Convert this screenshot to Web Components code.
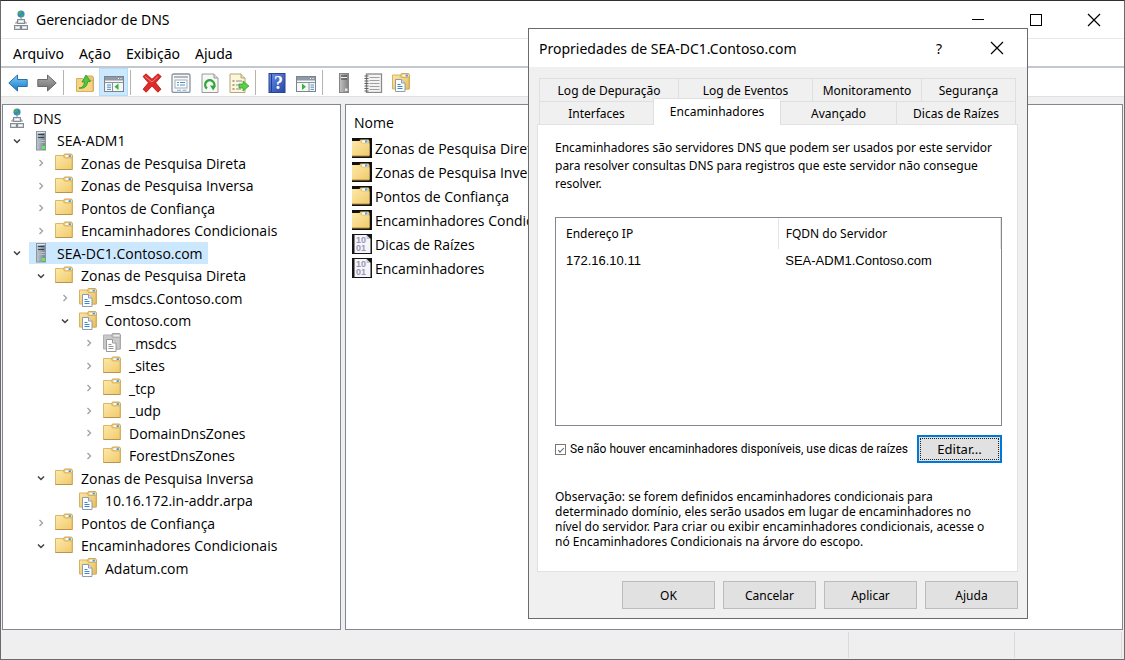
<!DOCTYPE html>
<html lang="pt-BR">
<head>
<meta charset="utf-8">
<title>Gerenciador de DNS</title>
<style>
    body {
        margin: 0;
        background: #efefef;
        font-family: "Noto Sans", "Open Sans", sans-serif;
        font-size: 14px;
        color: #000;
    }
</style>
</head>
<body>
<dns-manager></dns-manager>

<script>
const icons = {
    network: `
        <path d="M10 6v5M5 14v-2h10v2" fill="none" stroke="#8d939b"/>
        <circle cx="10" cy="4" r="3.6" fill="#3b86c4"/>
        <path d="M8 1.4c2-1 3 0 2.600 1.600-1 .6-1 1.400-2 1.400s-1.800-1-1.600-2zM10 5.200l2.600-.4c0 1.600-1.400 2.400-2 2.400z" fill="#46b34c"/>
        <g fill="#d5d9de" stroke="#858b93">
            <rect x="6.500" y="9.500" width="7" height="4"/>
            <rect x="3.500" y="15.500" width="6" height="4"/>
            <rect x="10.500" y="15.500" width="6" height="4"/>
        </g>
        <path d="M8 11.500h4M5 17.500h3M12 17.500h3" stroke="#fff"/>`,
    server: `
        <linearGradient id="g" x2="1"><stop stop-color="#c2cad2"/><stop offset="1" stop-color="#74808c"/></linearGradient>
        <rect x="5.500" y=".5" width="9" height="18.500" fill="url(#g)" stroke="#8b96a1"/>
        <path d="M6 1.500h8" stroke="#e6eaee"/>
        <path d="M7 3.500h6M7 6.500h6" stroke="#344351" stroke-width="1.200"/>
        <path d="M6 9.500h8M6 11.500h8" stroke="#b5bec7"/>
        <rect x="11" y="15" width="3" height="3" fill="#5cf04a"/>`,
    serverGray: `
        <linearGradient id="g" x2="1"><stop stop-color="#c4c4c4"/><stop offset="1" stop-color="#808080"/></linearGradient>
        <rect x="5.500" y=".5" width="9" height="19" fill="url(#g)" stroke="#858585"/>
        <path d="M7 3h6M7 6h6" stroke="#3d3d3d"/>
        <path d="M7 4.500h6" stroke="#eee"/>
        <rect x="11" y="15.500" width="2.500" height="2.500" fill="#e4e4e4"/>`,
    folder: `
        <linearGradient id="g" x2="1" y2="1"><stop stop-color="#fde9a9"/><stop offset="1" stop-color="#f0ca6c"/></linearGradient>
        <path d="M8.500 6V2.500l1-1.500h7l1 1.500V16h-9z" fill="#e8c676" stroke="#cfa95a"/>
        <rect x="10.500" y="2.200" width="6" height="1.800" fill="#fff"/>
        <rect x="13.500" y="2.200" width="2.500" height="1.800" fill="#4d9fe0"/>
        <path d="M.5 16.500v-14h7.500l1.500 2.500h7.500v11.500z" fill="url(#g)" stroke="#dcb766"/>
        <path d="M.5 16.500h17" stroke="#bb934a"/>`,
    zone: `
        <linearGradient id="g" x2="1" y2="1"><stop stop-color="#fbe6a4"/><stop offset="1" stop-color="#e8bd5c"/></linearGradient>
        <path d="M8.500 5V2l1-1.500h7l1 1.500v14h-9z" fill="#e8c676" stroke="#cfa95a"/>
        <rect x="10.500" y="1.700" width="6" height="1.800" fill="#fff"/>
        <rect x="13.500" y="1.700" width="2.500" height="1.800" fill="#4d9fe0"/>
        <path d="M.5 16v-14h7.500l1.500 2.500h7.500v11.500z" fill="url(#g)" stroke="#d9b260"/>
        <path d="M3.500 6.500h6l3.500 3.500v8.500H3.500z" fill="#fff" stroke="#8e9dad"/>
        <path d="M9.500 6.500v3.500h3.500" fill="#dfe7ef" stroke="#8e9dad"/>
        <path d="M5.500 11.500h3M5.500 13.500h5M5.500 15.500h5" stroke="#3f86cf"/>`,
    zoneGray: `
        <path d="M8.500 5V2l1-1.500h7l1 1.500v14h-9z" fill="#b8b8b8" stroke="#a2a2a2"/>
        <rect x="10.500" y="1.700" width="6" height="1.800" fill="#eee"/>
        <path d="M.5 16v-14h7.500l1.500 2.500h7.500v11.500z" fill="#c9c9c9" stroke="#b0b0b0"/>
        <path d="M3.500 6.500h6l3.500 3.500v8.500H3.500z" fill="#fff" stroke="#999"/>
        <path d="M9.500 6.500v3.500h3.500" fill="#e6e6e6" stroke="#999"/>
        <path d="M5.500 11.500h3M5.500 13.500h5M5.500 15.500h5" stroke="#999"/>`,
    folderDark: `
        <linearGradient id="g" x2="1" y2="1"><stop stop-color="#fde9a9"/><stop offset="1" stop-color="#f0ca6c"/></linearGradient>
        <path d="M0 0h20v20H0z" fill="#111"/>
        <path d="M7 5V3.500L8.500 1.500h8L17.500 3v14H7z" fill="#e8c676"/>
        <rect x="10" y="2.500" width="6" height="2" fill="#fff"/>
        <rect x="13" y="2.500" width="2.500" height="2" fill="#4d9fe0"/>
        <path d="M0 18V3h7.500l2 2.500h8V18z" fill="url(#g)"/>
        <path d="M0 18h17.500" stroke="#b38a3f"/>`,
    binary: `
        <path d="M0 0h20v20H0z" fill="#161616"/>
        <path d="M2.500 1h12l4 4v14h-16z" fill="#f5f5f7"/>
        <path d="M14.500 1v4h4z" fill="#c6c6cc"/>
        <g font-family="Liberation Sans, sans-serif" font-size="9" font-weight="bold" fill="#9a97bb">
            <text x="4" y="9">10</text>
            <text x="4" y="17">01</text>
        </g>`,
    back: `
        <linearGradient id="g" x2="0" y2="1"><stop stop-color="#7fd0f8"/><stop offset="1" stop-color="#1178c8"/></linearGradient>
        <path d="M.8 10L9.500 2v4.500h9.700v7H9.500V18z" fill="url(#g)" stroke="#2c6fa8"/>`,
    forward: `
        <linearGradient id="g" x2="0" y2="1"><stop stop-color="#b0b0b0"/><stop offset="1" stop-color="#6c6c6c"/></linearGradient>
        <path d="M19.200 10L10.500 2v4.500H.8v7h9.700V18z" fill="url(#g)" stroke="#6a6a6a"/>`,
    up: `
        <path d="M10 6l1.500-3h6L18.500 5v13H10z" fill="#e8c676" stroke="#d1ab5d"/>
        <path d="M1.500 18.500v-13h6l2 2h8.500v11z" fill="#f5d583" stroke="#d6af60"/>
        <path d="M4 15c3 0 5-2 5.500-6H7l4-7 4.500 6.500-2.800.2C12 13.500 9 16 4 15z" fill="#4fc83d" stroke="#2f9126" stroke-width=".8"/>`,
    tree: `
        <rect x=".5" y="3.500" width="19" height="15" fill="#f6f7f8" stroke="#7b838c"/>
        <path d="M1 4h18v3.500H1z" fill="#8f9aa6"/>
        <path d="M1 9.500h18M8.500 10v8" stroke="#8a929b"/>
        <path d="M14 5.500h1M16.500 5.500h1" stroke="#fff"/>
        <path d="M3 12h4M3 14.200h4M3 16.400h4" stroke="#4d8dc9"/>
        <path d="M14.500 10.500v6.500L10.500 13.800z" fill="#35b535"/>`,
    remove: `
        <path d="M1 3.500L4 .8l6 5.400L16 .8l3.200 2.700-5.500 6.300 5.300 6.500-3.200 2.900-5.800-6.200-5.800 6.200L1 16.300l5.400-6.500z" fill="#e02a2a" stroke="#b01818" stroke-width=".8"/>
        <path d="M3 3.500l7 5.500 6-5.500" fill="none" stroke="#f28a80"/>`,
    properties: `
        <rect x="1" y="1" width="18" height="18.500" rx="1.500" fill="#f7f8f9" stroke="#8c939b" stroke-width="1.300"/>
        <path d="M3 4h14" stroke="#9aa3ad" stroke-width="1.500"/>
        <rect x="4" y="7" width="12" height="8" fill="#fff" stroke="#a4adb6"/>
        <path d="M6 9.500h2M9 9.500h5M6 12h2M9 12h5" stroke="#4591d0"/>
        <path d="M6 17.300h4M11.500 17.300h4" stroke="#7fb2dc"/>`,
    refresh: `
        <path d="M2 1h12l4 4v14.500H2z" fill="#f7f7f7" stroke="#9a9a9a"/>
        <path d="M14 1v4h4" fill="#ddd" stroke="#9a9a9a"/>
        <path d="M7 15.500a4.600 4.600 0 1 1 6.500-1" fill="none" stroke="#32a83a" stroke-width="2.400"/>
        <path d="M10 12.500l6 .3-2.800 4.700z" fill="#32a83a"/>`,
    exporter: `
        <path d="M1 1h11l4 4v14.500H1z" fill="#fdf6d8" stroke="#b3a57c"/>
        <path d="M12 1v4h4" fill="#efe3b4" stroke="#b3a57c"/>
        <path d="M3.500 8h2M3.500 12h2M3.500 16h2" stroke="#555"/>
        <path d="M7 8h6M7 12h5M7 16h5" stroke="#8c86b0"/>
        <path d="M10 11h4V8l6 5-6 5v-3h-4z" fill="#5ad045" stroke="#35972a" stroke-width=".7"/>`,
    help: `
        <linearGradient id="g" x2="1" y2="1"><stop stop-color="#6b8ee6"/><stop offset="1" stop-color="#2446a8"/></linearGradient>
        <rect x="2" y=".5" width="16" height="19" fill="url(#g)" stroke="#284590"/>
        <path d="M4.500 1v18" stroke="#213d90"/>
        <text x="11.500" y="16" text-anchor="middle" font-family="Liberation Serif, serif" font-size="18" font-weight="bold" fill="#fff">?</text>`,
    actions: `
        <rect x=".5" y="3.500" width="19" height="15" fill="#f6f7f8" stroke="#7b838c"/>
        <path d="M1 4h18v3.500H1z" fill="#8f9aa6"/>
        <path d="M1 9.500h18M13 10v8" stroke="#8a929b"/>
        <path d="M14 5.500h1M16.500 5.500h1" stroke="#fff"/>
        <path d="M14.500 12h3.500M14.500 14.200h3.500M14.500 16.400h3.500" stroke="#4d8dc9"/>
        <path d="M6 10.500V17l4-3.200z" fill="#35b535"/>`,
    notebook: `
        <rect x="3.500" y="1" width="15" height="18.500" fill="#f4f4f4" stroke="#8a8a8a" stroke-width="1.300"/>
        <path d="M6.500 4.500h10M6.500 7.500h10M6.500 10.500h10M6.500 13.500h10M6.500 16.500h10" stroke="#a0a0a0"/>
        <path d="M1.500 3h4M1.500 5.500h4M1.500 8h4M1.500 10.500h4M1.500 13h4M1.500 15.500h4M1.500 18h4" stroke="#5f5f5f"/>`,
    minimize: `<path d="M4 9.500h12" stroke="#000"/>`,
    maximize: `<rect x="4.500" y="4.500" width="11" height="11" fill="none" stroke="#000"/>`,
    close: `<path d="M4 4l12 12M16 4L4 16" stroke="#000" stroke-width="1.200"/>`,
    open: `<path d="M7 8.500l3 3 3-3" fill="none" stroke="#404040" stroke-width="1.500"/>`,
    closed: `<path d="M8.500 7l3 3-3 3" fill="none" stroke="#a0a0a0" stroke-width="1.300"/>`
};

class DnsIcon extends HTMLElement {
    connectedCallback() {
        this.attachShadow({ mode: "open" });
        this.shadowRoot.innerHTML = `
            <style>
                :host { display: inline-flex; flex: none; width: 20px; height: 20px; }
                svg { width: 100%; height: 100%; }
            </style>
            <svg viewBox="0 0 20 20" aria-hidden="true">${icons[this.getAttribute("name")]}</svg>
        `;
    }
}

customElements.define("dns-icon", DnsIcon);

class TitleBar extends HTMLElement {
    connectedCallback() {
        const buttons = this.getAttribute("buttons").split(" ");
        const names = { minimize: "Minimizar", maximize: "Maximizar", close: "Fechar", help: "Ajuda" };
        this.attachShadow({ mode: "open" });
        this.shadowRoot.innerHTML = `
            <style>
                :host { display: flex; align-items: center; height: 38px; padding-right: 1px; box-sizing: border-box; background: #fff; }
                .caption { display: flex; align-items: center; gap: 5px; flex: 1; padding-left: 10px; white-space: nowrap; }
                button {
                    display: flex;
                    align-items: center;
                    justify-content: center;
                    width: 58px;
                    height: 100%;
                    padding: 0;
                    border: none;
                    background: none;
                    font: inherit;
                    color: #000;
                }
                button:hover { background: #e5e5e5; }
            </style>
            <div class="caption"><slot name="icon"></slot><slot></slot></div>
            ${buttons.map(name => `
                <button aria-label="${names[name]}">${name === "help" ? "?" : `<dns-icon name="${name}"></dns-icon>`}</button>
            `).join("")}
        `;
    }
}

customElements.define("title-bar", TitleBar);

class MenuBar extends HTMLElement {
    connectedCallback() {
        this.attachShadow({ mode: "open" });
        this.shadowRoot.innerHTML = `
            <style>
                :host { display: block; background: #fff; border-bottom: 2px solid #c3c8cf; }
                nav { display: flex; gap: 15px; height: 27px; padding-left: 12px; }
                button { padding: 1px 0 0; border: none; background: none; font: inherit; color: inherit; }
            </style>
            <nav>
                ${["Arquivo", "Ação", "Exibição", "Ajuda"].map(item => `<button>${item}</button>`).join("")}
            </nav>
        `;
    }
}

customElements.define("menu-bar", MenuBar);

const tools = [
    ["back", "Voltar"], ["forward", "Avançar"], null,
    ["up", "Um nível acima"], ["tree", "Mostrar árvore", true], null,
    ["remove", "Excluir"], ["properties", "Propriedades"], ["refresh", "Atualizar"], ["exporter", "Exportar lista"], null,
    ["help", "Ajuda"], ["actions", "Painel de ações"], null,
    ["serverGray", "Servidor"], ["notebook", "Registros"], ["zone", "Nova zona"]
];

class ToolBar extends HTMLElement {
    connectedCallback() {
        this.attachShadow({ mode: "open" });
        this.shadowRoot.innerHTML = `
            <style>
                :host { display: flex; height: 28px; padding-left: 2px; background: #fff; border-bottom: 1px solid #e0e0e0; }
                button {
                    display: flex;
                    align-items: center;
                    justify-content: center;
                    width: 29px;
                    padding: 2px 0 0;
                    border: none;
                    background: none;
                }
                button.active { background: #cce8ff; box-shadow: inset 0 0 0 1px #b5dcf8; }
                i { width: 7px; margin: 2px 0 1px 2px; box-sizing: border-box; border-left: 1px solid #b4b4b4; }
            </style>
            ${tools.map(tool => tool
                ? `<button aria-label="${tool[1]}" class="${tool[2] ? "active" : ""}"><dns-icon name="${tool[0]}"></dns-icon></button>`
                : "<i></i>"
            ).join("")}
        `;
    }
}

customElements.define("tool-bar", ToolBar);

// level, icon, label, toggle state, selected
const nodes = [
    [0, "network", "DNS", ""],
    [1, "server", "SEA-ADM1", "open"],
    [2, "folder", "Zonas de Pesquisa Direta", "closed"],
    [2, "folder", "Zonas de Pesquisa Inversa", "closed"],
    [2, "folder", "Pontos de Confiança", "closed"],
    [2, "folder", "Encaminhadores Condicionais", "closed"],
    [1, "server", "SEA-DC1.Contoso.com", "open", true],
    [2, "folder", "Zonas de Pesquisa Direta", "open"],
    [3, "zone", "_msdcs.Contoso.com", "closed"],
    [3, "zone", "Contoso.com", "open"],
    [4, "zoneGray", "_msdcs", "closed"],
    [4, "folder", "_sites", "closed"],
    [4, "folder", "_tcp", "closed"],
    [4, "folder", "_udp", "closed"],
    [4, "folder", "DomainDnsZones", "closed"],
    [4, "folder", "ForestDnsZones", "closed"],
    [2, "folder", "Zonas de Pesquisa Inversa", "open"],
    [3, "zone", "10.16.172.in-addr.arpa", ""],
    [2, "folder", "Pontos de Confiança", "closed"],
    [2, "folder", "Encaminhadores Condicionais", "open"],
    [3, "zone", "Adatum.com", ""]
];

class TreeNode extends HTMLElement {
    connectedCallback() {
        const level = Number(this.getAttribute("level"));
        const state = this.getAttribute("state");
        this.attachShadow({ mode: "open" });
        this.shadowRoot.innerHTML = `
            <style>
                :host { display: flex; align-items: center; gap: 2px; padding-left: ${level ? level * 24 - 20 : 2}px; }
                .toggle { display: flex; width: 20px; }
                .node { display: flex; align-items: center; gap: 6px; height: 100%; padding: 0 5px 0 2px; white-space: nowrap; }
                :host([selected]) .node { background: #cce8ff; }
            </style>
            ${level ? `<span class="toggle">${state ? `<dns-icon name="${state}"></dns-icon>` : ""}</span>` : ""}
            <span class="node"><dns-icon name="${this.getAttribute("icon")}"></dns-icon><slot></slot></span>
        `;
    }
}

customElements.define("tree-node", TreeNode);

class DnsTree extends HTMLElement {
    connectedCallback() {
        this.attachShadow({ mode: "open" });
        this.shadowRoot.innerHTML = `
            <style>
                :host { display: block; padding-top: 2px; background: #fff; border: 1px solid #828790; overflow: hidden; }
                tree-node { height: 22px; }
                tree-node:nth-child(even) { height: 23px; }
            </style>
            <div role="tree">
                ${nodes.map(([level, icon, label, state, selected]) => `
                    <tree-node role="treeitem" level="${level}" icon="${icon}" state="${state}" ${selected ? "selected" : ""}>${label}</tree-node>
                `).join("")}
            </div>
        `;
    }
}

customElements.define("dns-tree", DnsTree);

const entries = [
    ["folderDark", "Zonas de Pesquisa Direta"],
    ["folderDark", "Zonas de Pesquisa Inversa"],
    ["folderDark", "Pontos de Confiança"],
    ["folderDark", "Encaminhadores Condicionais"],
    ["binary", "Dicas de Raízes"],
    ["binary", "Encaminhadores"]
];

class DnsList extends HTMLElement {
    connectedCallback() {
        this.attachShadow({ mode: "open" });
        this.shadowRoot.innerHTML = `
            <style>
                :host { display: block; background: #fff; border: 1px solid #828790; }
                table { border-collapse: collapse; }
                th { height: 31px; padding: 4px 0 0 8px; box-sizing: border-box; font-weight: normal; text-align: left; }
                td { height: 24px; padding: 0 0 0 6px; }
                .entry { display: flex; align-items: center; gap: 3px; white-space: nowrap; }
            </style>
            <table>
                <thead><tr><th>Nome</th></tr></thead>
                <tbody>
                    ${entries.map(([icon, label]) => `
                        <tr><td><span class="entry"><dns-icon name="${icon}"></dns-icon>${label}</span></td></tr>
                    `).join("")}
                </tbody>
            </table>
        `;
    }
}

customElements.define("dns-list", DnsList);

class PushButton extends HTMLElement {
    connectedCallback() {
        this.attachShadow({ mode: "open" });
        this.shadowRoot.innerHTML = `
            <style>
                :host { display: block; flex: none; height: 28px; }
                button {
                    width: 100%;
                    height: 100%;
                    padding: 0;
                    border: 1px solid #bcbcbc;
                    background: #e1e1e1;
                    font: inherit;
                    color: inherit;
                }
                :host([default]) button { border: 2px solid #0078d7; outline: 1px dotted #222; outline-offset: -4px; }
            </style>
            <button><slot></slot></button>
        `;
    }
}

customElements.define("push-button", PushButton);

class TabStrip extends HTMLElement {
    connectedCallback() {
        this.attachShadow({ mode: "open" });
        this.shadowRoot.innerHTML = `
            <style>
                :host { display: block; padding: 0 2px; }
                .row { display: grid; height: 23px; border-right: 1px solid #dfdfdf; }
                .top { grid-template-columns: 139fr 134fr 109fr 94fr; }
                .bottom { grid-template-columns: 114fr 127fr 116fr 119fr; }
                button {
                    padding: 0;
                    border: solid #dfdfdf;
                    border-width: 1px 0 0 1px;
                    background: #f0f0f0;
                    font: inherit;
                    color: inherit;
                    white-space: nowrap;
                }
                button[aria-selected=true] { margin: -3px 0 -1px; padding-bottom: 2px; background: #fff; z-index: 1; }
            </style>
            <div class="row top">
                <button role="tab">Log de Depuração</button>
                <button role="tab">Log de Eventos</button>
                <button role="tab">Monitoramento</button>
                <button role="tab">Segurança</button>
            </div>
            <div class="row bottom">
                <button role="tab">Interfaces</button>
                <button role="tab" aria-selected="true">Encaminhadores</button>
                <button role="tab">Avançado</button>
                <button role="tab">Dicas de Raízes</button>
            </div>
        `;
    }
}

customElements.define("tab-strip", TabStrip);

class ForwarderTable extends HTMLElement {
    connectedCallback() {
        this.attachShadow({ mode: "open" });
        this.shadowRoot.innerHTML = `
            <style>
                :host { display: block; height: 207px; border: 1px solid #828790; background: #fff; }
                table { width: 100%; border-collapse: collapse; table-layout: fixed; }
                th, td { padding: 0 0 0 10px; text-align: left; font-weight: normal; }
                th { height: 31px; border-right: 1px solid #e5e5e5; }
                th:last-child, td:last-child { padding-left: 7px; }
                td { height: 22px; font-family: "Liberation Sans", Arial, sans-serif; font-size: 13px; }
                col:first-child { width: 50%; }
            </style>
            <table>
                <colgroup><col><col></colgroup>
                <thead><tr><th>Endereço IP</th><th>FQDN do Servidor</th></tr></thead>
                <tbody><tr><td>172.16.10.11</td><td>SEA-ADM1.Contoso.com</td></tr></tbody>
            </table>
        `;
    }
}

customElements.define("forwarder-table", ForwarderTable);

class PropertiesDialog extends HTMLElement {
    connectedCallback() {
        this.attachShadow({ mode: "open" });
        this.shadowRoot.innerHTML = `
            <style>
                :host { display: block; border: 1px solid #6b6b6b; background: #f0f0f0; font-size: 12px; }
                title-bar { font-size: 14px; }
                .body { padding: 11px 9px 9px 8px; }
                .panel { padding: 14px 15px 22px 17px; border: 1px solid #e2e2e2; background: #fff; }
                p { margin: 0; white-space: nowrap; }
                .intro { margin-bottom: 24px; line-height: 18px; }
                .use-hints { display: flex; align-items: center; gap: 4px; margin: 9px 0 26px; white-space: nowrap; }
                .use-hints label { flex: 1; font-family: Roboto, "Noto Sans", sans-serif; }
                input {
                    display: grid;
                    place-items: center;
                    width: 11px;
                    height: 11px;
                    margin: 0;
                    appearance: none;
                    border: 1px solid #777;
                    background: #fff;
                }
                input:checked::before {
                    content: "";
                    width: 5px;
                    height: 2px;
                    border: solid #666;
                    border-width: 0 0 1px 1px;
                    transform: rotate(-45deg);
                }
                .use-hints push-button { width: 85px; font-size: 13px; }
                .note { line-height: 15px; }
                footer { display: flex; justify-content: flex-end; gap: 8px; margin-top: 9px; }
                footer push-button { width: 93px; }
            </style>
            <title-bar buttons="help close">Propriedades de SEA-DC1.Contoso.com</title-bar>
            <div class="body">
                <tab-strip role="tablist"></tab-strip>
                <div class="panel" role="tabpanel">
                    <p class="intro">Encaminhadores são servidores DNS que podem ser usados por este servidor<br>
                    para resolver consultas DNS para registros que este servidor não consegue<br>
                    resolver.</p>
                    <forwarder-table></forwarder-table>
                    <div class="use-hints">
                        <input type="checkbox" id="hints" checked>
                        <label for="hints">Se não houver encaminhadores disponíveis, use dicas de raízes</label>
                        <push-button default>Editar...</push-button>
                    </div>
                    <p class="note">Observação: se forem definidos encaminhadores condicionais para<br>
                    determinado domínio, eles serão usados em lugar de encaminhadores no<br>
                    nível do servidor. Para criar ou exibir encaminhadores condicionais, acesse o<br>
                    nó Encaminhadores Condicionais na árvore do escopo.</p>
                </div>
                <footer>
                    <push-button>OK</push-button>
                    <push-button>Cancelar</push-button>
                    <push-button>Aplicar</push-button>
                    <push-button>Ajuda</push-button>
                </footer>
            </div>
        `;
    }
}

customElements.define("properties-dialog", PropertiesDialog);

class StatusBar extends HTMLElement {
    connectedCallback() {
        this.attachShadow({ mode: "open" });
        this.shadowRoot.innerHTML = `
            <style>
                :host { display: grid; grid-template-columns: 1fr 166px 107px; height: 29px; padding: 2px 2px 1px 0; box-sizing: border-box; background: #efefef; }
                span { border-right: 1px solid #dadada; }
            </style>
            <span></span><span></span><span></span>
        `;
    }
}

customElements.define("status-bar", StatusBar);

class DnsManager extends HTMLElement {
    connectedCallback() {
        this.attachShadow({ mode: "open" });
        this.shadowRoot.innerHTML = `
            <style>
                :host {
                    position: relative;
                    display: flex;
                    flex-direction: column;
                    min-height: 100vh;
                    box-sizing: border-box;
                    border: 1px solid #6b6b6b;
                    border-top-color: #2f2f2f;
                    background: #efefef;
                }
                .main > title-bar { border-bottom: 1px solid #e8e8e8; }
                .panes {
                    display: grid;
                    grid-template-columns: 339px 1fr;
                    gap: 4px;
                    flex: 1;
                    padding: 7px 1px 0;
                    font-family: "Open Sans", "Noto Sans", sans-serif;
                }
                properties-dialog { position: absolute; top: 27px; right: 96px; width: 498px; }
            </style>
            <header class="main">
                <title-bar buttons="minimize maximize close"><dns-icon slot="icon" name="network"></dns-icon>Gerenciador de DNS</title-bar>
                <menu-bar></menu-bar>
                <tool-bar></tool-bar>
            </header>
            <div class="panes">
                <dns-tree></dns-tree>
                <dns-list></dns-list>
            </div>
            <status-bar></status-bar>
            <properties-dialog role="dialog" aria-label="Propriedades de SEA-DC1.Contoso.com"></properties-dialog>
        `;
    }
}

customElements.define("dns-manager", DnsManager);
</script>
</body>
</html>
